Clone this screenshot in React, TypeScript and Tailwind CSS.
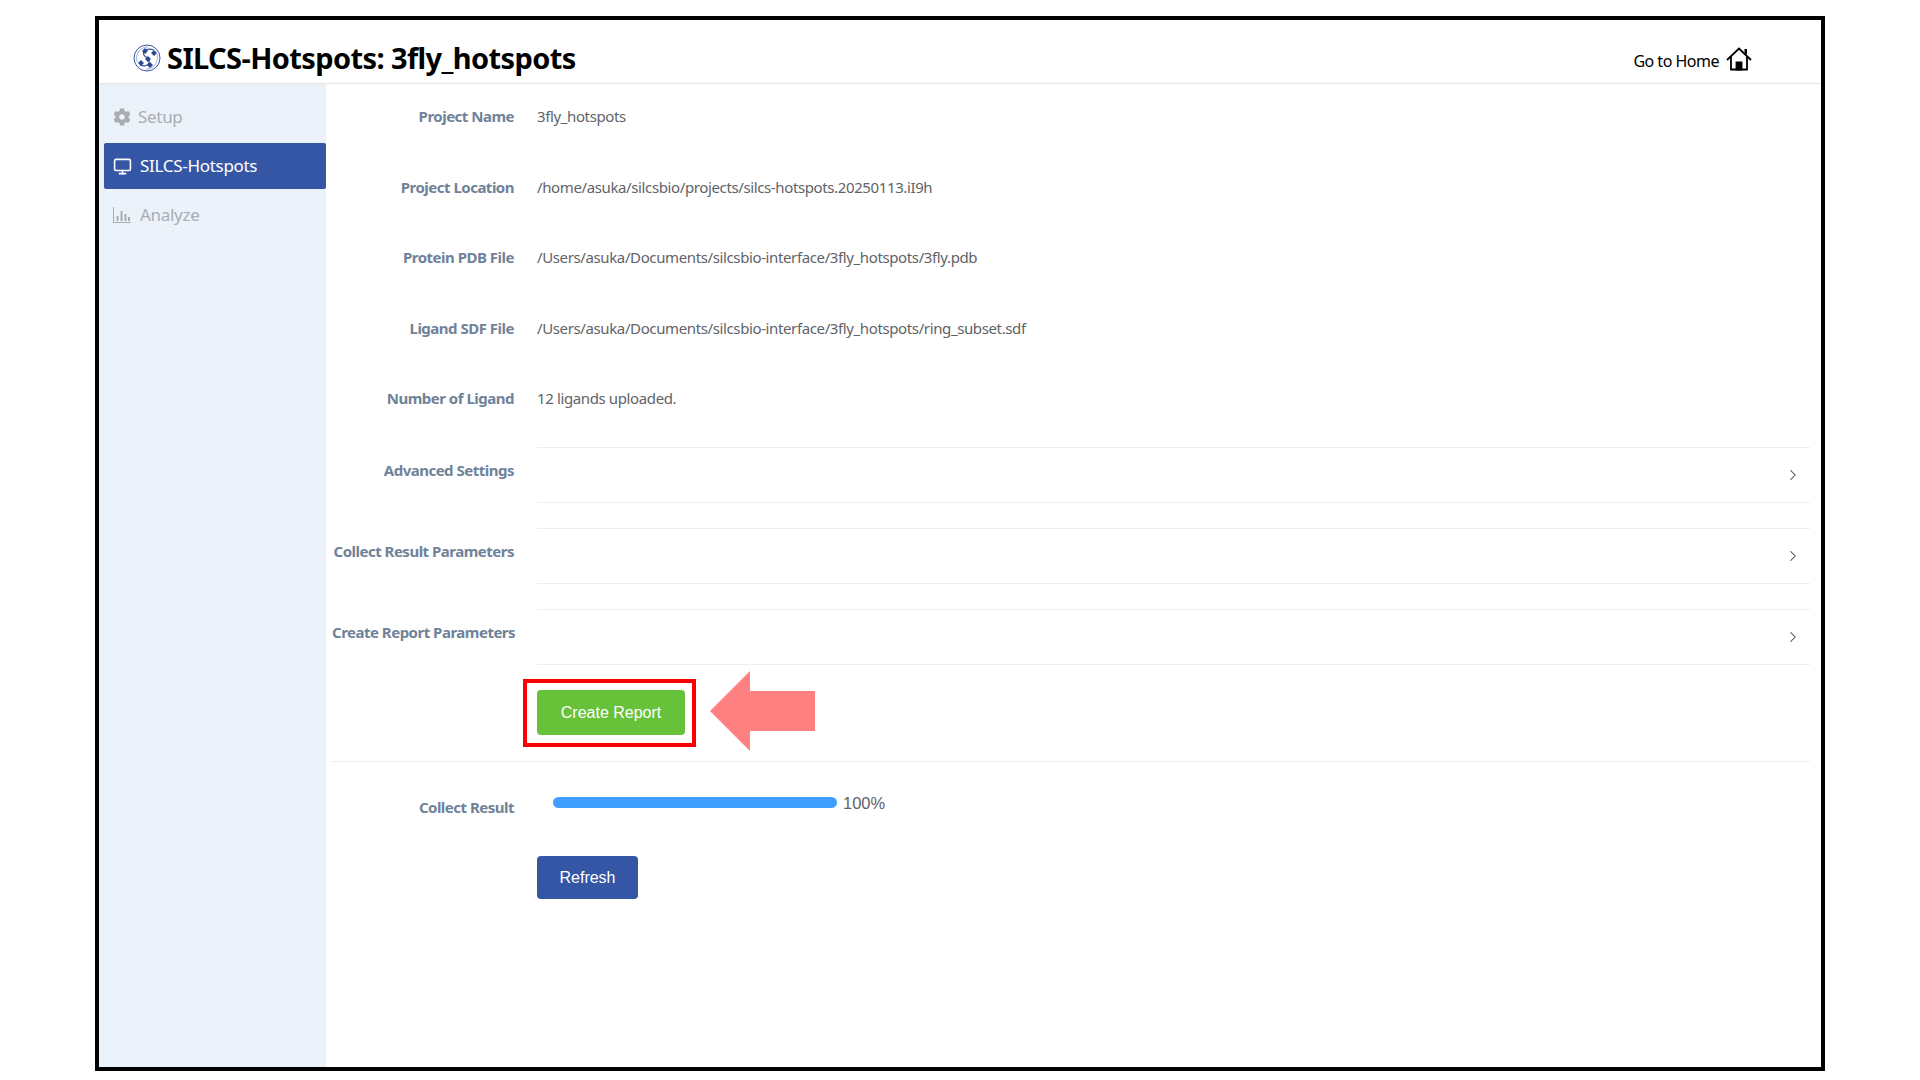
import React from 'react';
import { ChevronRight, Monitor } from 'lucide-react';

const INFO_ROWS = [
  { label: 'Project Name', value: '3fly_hotspots' },
  { label: 'Project Location', value: '/home/asuka/silcsbio/projects/silcs-hotspots.20250113.iI9h' },
  { label: 'Protein PDB File', value: '/Users/asuka/Documents/silcsbio-interface/3fly_hotspots/3fly.pdb' },
  { label: 'Ligand SDF File', value: '/Users/asuka/Documents/silcsbio-interface/3fly_hotspots/ring_subset.sdf' },
  { label: 'Number of Ligand', value: '12 ligands uploaded.' },
];

const ACCORDIONS = ['Advanced Settings', 'Collect Result Parameters', 'Create Report Parameters'];

const Logo = () => (
  <svg viewBox="0 0 28 28" className="w-[28px] h-[28px] shrink-0">
    <circle cx="14" cy="14" r="13" fill="none" stroke="#3556a5" strokeWidth="1" />
    <path d="M4 18 C2 10 7 3 15 3 M24 10 C26 18 21 25 13 25" fill="none" stroke="#9fb2d8" strokeWidth="1" />
    <path d="M21 6 C12 3 7 9 13 13 C19 17 16 24 7 21" fill="none" stroke="#3556a5" strokeWidth="1.2" />
    <path d="M12 4 L15 7 L12 10 L9 7 Z M21 6 L24 9 L21 12 L18 9 Z M8 16 L11 19 L8 22 L5 19 Z M15 12 L18 15 L15 18 L12 15 Z M17 18 L20 21 L17 24 L14 21 Z" fill="#2c4a94" />
  </svg>
);

const HomeIcon = () => (
  <svg viewBox="0 0 26 24" className="w-[26px] h-[24px] shrink-0" fill="none" stroke="#000" strokeWidth="1.8">
    <path d="M1 13 L13 1.5 L25 13" strokeLinejoin="miter" />
    <path d="M5 10 V22.5 H21 V10" />
    <path d="M10.5 22.5 V15.5 H15.5 V22.5 Z" fill="#000" />
    <path d="M18.5 2 H21 V8 L18.5 5.5 Z" fill="#000" stroke="none" />
  </svg>
);

const Gear = () => (
  <svg viewBox="0 0 512 512" className="w-[18px] h-[18px] shrink-0" fill="#a9adb3">
    <path d="M487 316l-42-25c4-23 4-47 0-70l42-25c5-3 7-9 5-14-11-35-30-67-54-93-4-4-10-5-15-2l-42 24c-18-15-38-27-61-35V28c0-6-4-10-9-11-37-8-74-8-109 0-5 1-9 5-9 11v48c-22 8-43 20-60 35L91 87c-5-3-11-2-15 2-24 26-43 58-54 93-2 5 0 11 5 14l42 25c-4 23-4 47 0 70l-42 25c-5 3-7 9-5 14 11 35 30 67 54 93 4 4 10 5 15 2l42-24c18 15 38 27 60 35v48c0 6 4 10 9 11 37 8 74 8 109 0 5-1 9-5 9-11v-48c23-8 43-20 61-35l42 24c5 3 11 2 15-2 24-26 43-58 54-93 2-5 0-11-5-14zM256 336c-44 0-80-36-80-80s36-80 80-80 80 36 80 80-36 80-80 80z" />
  </svg>
);

const Bars = () => (
  <svg viewBox="0 0 18 16" className="w-[18px] h-[16px] shrink-0" fill="#a9adb3">
    <path d="M0 0 H1 V15 H18 V16 H0 Z" />
    <rect x="3.5" y="9" width="2" height="5" />
    <rect x="7.5" y="4" width="2" height="10" />
    <rect x="11.5" y="7" width="2" height="7" />
    <rect x="15" y="10" width="2" height="4" />
  </svg>
);

export default function App() {
  return (
    <div className="w-[1920px] h-[1080px] bg-white pt-[16px] pl-[95px] overflow-hidden font-['Noto_Sans',sans-serif]">
      <div className="w-[1730px] h-[1055px] border-[4px] border-black flex flex-col bg-white">
        {/* header */}
        <div className="h-[64px] shrink-0 border-b border-[#e6e6e6] flex items-center justify-between pt-[12px] pl-[34px] pr-[69px]">
          <div className="flex items-center gap-[6px]">
            <Logo />
            <span className="text-[29px] font-bold text-black tracking-[-0.6px]">SILCS-Hotspots: 3fly_hotspots</span>
          </div>
          <div className="flex items-center gap-[7px] pt-[2px]">
            <span className="text-[16px] pt-[4px] text-black tracking-[-0.5px]">Go to Home</span>
            <HomeIcon />
          </div>
        </div>

        <div className="flex flex-1 min-h-0">
          {/* sidebar */}
          <div className="w-[227px] shrink-0 bg-[#ebf2f9] pt-[10px] pl-[5px] text-[17px]">
            <div className="h-[46px] flex items-center gap-[7px] pl-[9px] text-[#a9adb3] tracking-[-0.3px]">
              <Gear />
              <span>Setup</span>
            </div>
            <div className="mt-[3px] h-[46px] flex items-center gap-[8px] pl-[9px] bg-[#3556a5] rounded-[2px] text-white tracking-[-0.3px]">
              <Monitor className="w-[19px] h-[19px]" strokeWidth={2} />
              <span>SILCS-Hotspots</span>
            </div>
            <div className="mt-[3px] h-[46px] flex items-center gap-[9px] pl-[9px] text-[#a9adb3] tracking-[-0.3px]">
              <Bars />
              <span>Analyze</span>
            </div>
          </div>

          {/* main */}
          <div className="flex-1 pt-[21px] pl-[6px] pr-[11px] relative">
            {INFO_ROWS.map(row => (
              <div key={row.label} className="flex h-[70.6px] items-start">
                <div className="w-[182px] text-right text-[15px] leading-[22px] font-bold text-[#708299] tracking-[-0.5px]">{row.label}</div>
                <div className="ml-[23px] text-[15px] leading-[22px] text-[#5f6368] tracking-[-0.38px]">{row.value}</div>
              </div>
            ))}

            <div className="-mt-[11px]">
              {ACCORDIONS.map(label => (
                <div key={label} className="flex h-[81px] items-start">
                  <div className="w-[182px] pt-[12px] text-right text-[15px] leading-[22px] font-bold text-[#708299] tracking-[-0.5px] whitespace-nowrap">{label}</div>
                  <div className="ml-[23px] flex-1 h-[56px] border-y border-[#ebeef5] flex items-center justify-end pr-[8px]">
                    <ChevronRight className="w-[18px] h-[18px] text-[#3f4348]" strokeWidth={1.4} />
                  </div>
                </div>
              ))}
            </div>

            <div className="pl-[205px]">
              <div className="relative w-[148px]">
                <button className="w-[148px] h-[45px] pt-[2px] bg-[#67c23a] rounded-[4px] text-white text-[16px] font-['Liberation_Sans',sans-serif]">Create Report</button>
                <div className="absolute -left-[14px] -top-[11px] w-[173px] h-[68px] border-[4px] border-[#ff0000]" />
                <svg viewBox="0 0 105 80" className="absolute left-[173px] -top-[19px] w-[105px] h-[80px]">
                  <path d="M0 40 L40 0 V20 H105 V60 H40 V80 Z" fill="#ff8080" />
                </svg>
              </div>
            </div>

            <div className="mt-[26px] border-t border-[#ebeef5]" />

            <div className="flex items-start h-[24px] mt-[35px]">
              <div className="w-[182px] -mt-[0.5px] text-right text-[15px] leading-[22px] font-bold text-[#708299] tracking-[-0.5px]">Collect Result</div>
              <div className="ml-[39px] w-[284px] h-[11px] bg-[#409eff] rounded-full" />
              <span className="ml-[6px] -mt-[3px] text-[16.5px] leading-[18px] text-[#606266] font-['Liberation_Sans',sans-serif]">100%</span>
            </div>

            <div className="pl-[205px] mt-[35px]">
              <button className="w-[101px] h-[43px] pt-[2px] bg-[#3556a5] rounded-[4px] text-white text-[16px] font-['Liberation_Sans',sans-serif]">Refresh</button>
            </div>
          </div>
        </div>
      </div>
    </div>
  );
}
